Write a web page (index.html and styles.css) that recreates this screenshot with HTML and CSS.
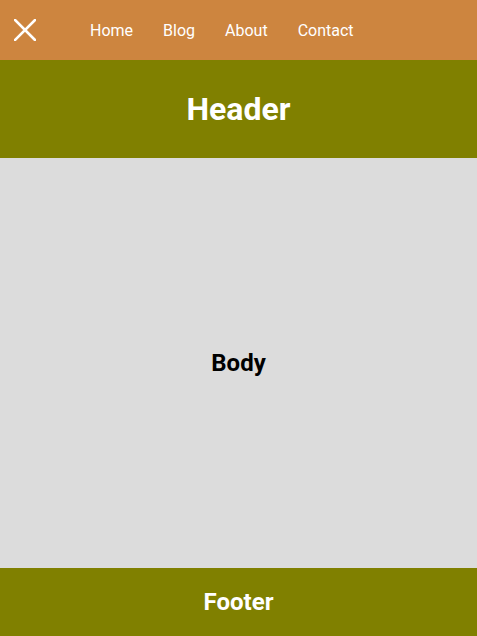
FILE: index.html
```html
<!DOCTYPE html>
<html lang="en">
<head>
<meta charset="utf-8">
<title>Layout</title>
<link rel="stylesheet" href="styles.css">
</head>
<body>
<div class="page">
  <nav class="nav">
    <button class="close" aria-label="Close menu">
      <svg width="22" height="22" viewBox="0 0 22 22"><path d="M1 1L21 21M21 1L1 21" stroke="#fff" stroke-width="2.6" stroke-linecap="square" fill="none"/></svg>
    </button>
    <ul class="links">
      <li><a href="#">Home</a></li>
      <li><a href="#">Blog</a></li>
      <li><a href="#">About</a></li>
      <li><a href="#">Contact</a></li>
    </ul>
  </nav>
  <header class="header"><h1>Header</h1></header>
  <main class="main"><h2>Body</h2></main>
  <footer class="footer"><h2>Footer</h2></footer>
</div>
</body>
</html>
```
FILE: styles.css
```css
* { box-sizing: border-box; }
html, body { margin: 0; padding: 0; }
body { font-family: Roboto, "Liberation Sans", sans-serif; }
.page { display: flex; flex-direction: column; height: 636px; }
.nav {
  height: 60px;
  background: #cd853f;
  display: flex;
  align-items: center;
  padding-left: 14px;
}
.close {
  background: none; border: 0; padding: 0; margin: 0;
  width: 22px; height: 22px; display: flex; cursor: pointer;
}
.links {
  list-style: none; margin: 0 0 0 54px; padding: 0;
  display: flex; gap: 30px;
}
.links a { color: #fff; text-decoration: none; font-size: 16px; }
.header {
  height: 98px; background: #808000;
  display: flex; align-items: center; justify-content: center;
}
.header h1 { margin: 0; color: #fff; font-size: 32px; font-weight: 700; }
.main {
  flex: 1; background: #dcdcdc;
  display: flex; align-items: center; justify-content: center;
}
.main h2 { margin: 0; color: #000; font-size: 24px; font-weight: 700; }
.footer {
  height: 68px; background: #808000;
  display: flex; align-items: center; justify-content: center;
}
.footer h2 { margin: 0; color: #fff; font-size: 24px; font-weight: 700; }
```
